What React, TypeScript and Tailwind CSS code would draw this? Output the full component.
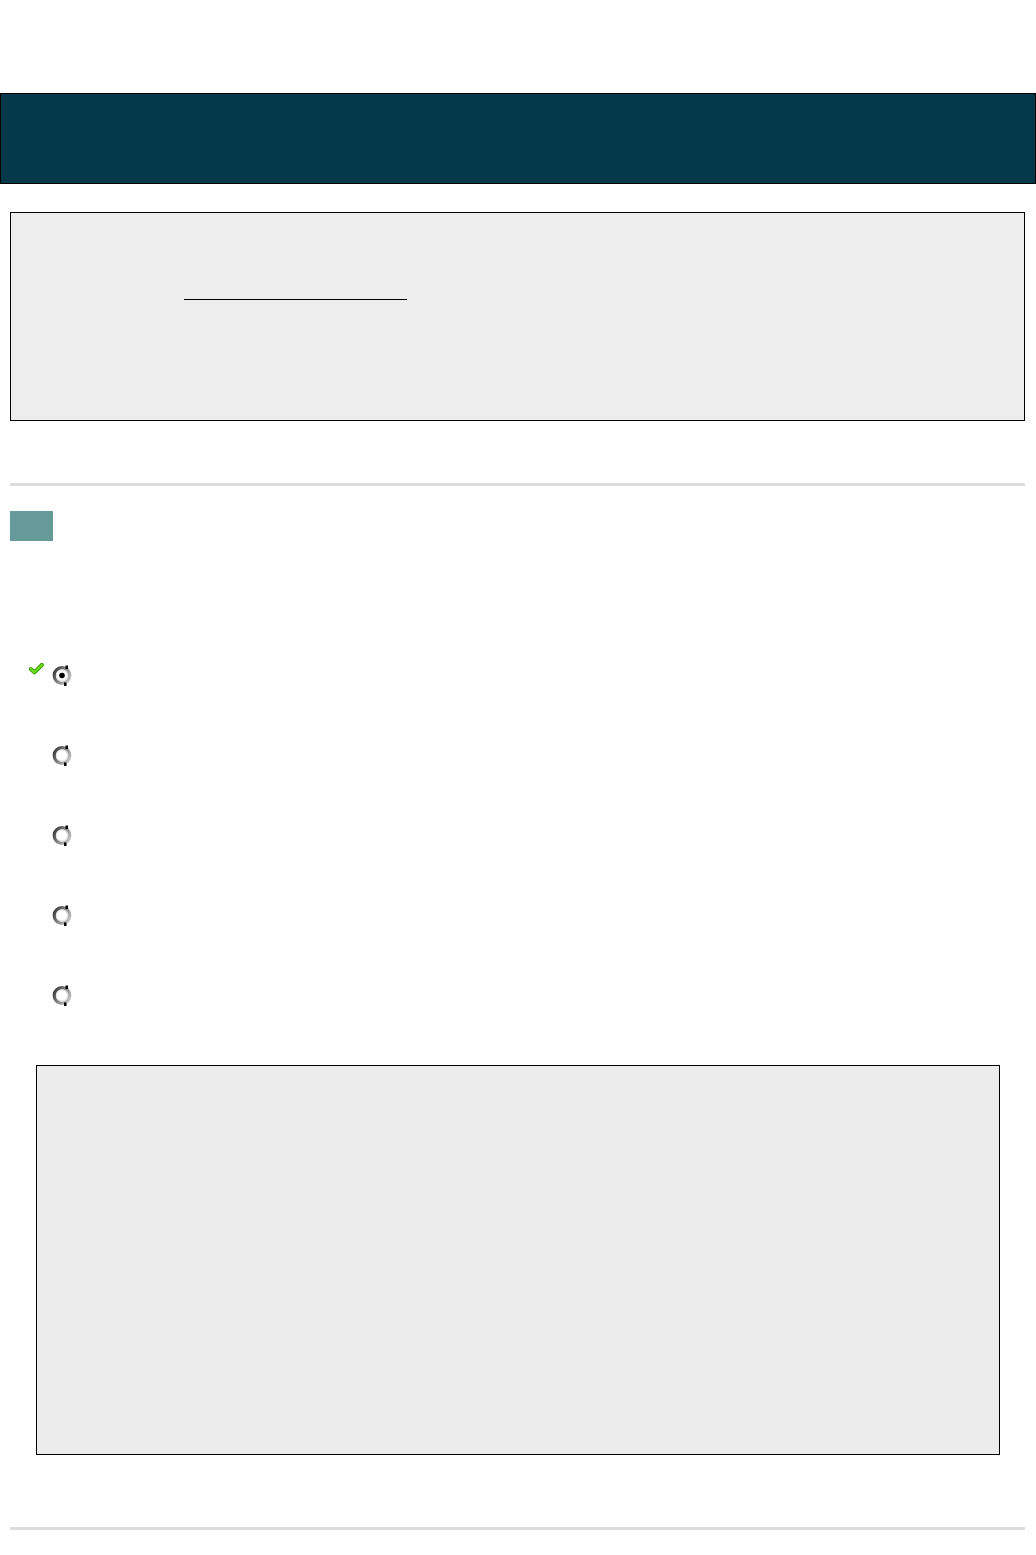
import React from "react";

function Check() {
  return (
    <svg width="15" height="12" viewBox="0 0 15 12" className="block">
      <path d="M1.8 6 L5.4 9.3 L12.8 2" fill="none" stroke="#3c9200" strokeWidth="4" strokeLinecap="round" strokeLinejoin="round" />
      <path d="M1.8 6 L5.4 9.3 L12.8 2" fill="none" stroke="#66e01a" strokeWidth="2.3" strokeLinecap="round" strokeLinejoin="round" />
    </svg>
  );
}

function Radio({ checked, id }: { checked?: boolean; id: string }) {
  return (
    <svg width="21" height="23" viewBox="0 0 21 23" className="block shrink-0">
      <defs>
        <linearGradient id={id} x1="0" y1="0.2" x2="1" y2="0.8">
          <stop offset="0" stopColor="#3a3a3a" />
          <stop offset="0.5" stopColor="#888888" />
          <stop offset="1" stopColor="#c4c4c4" />
        </linearGradient>
      </defs>
      <circle cx="10" cy="11.5" r="7.8" fill="#ffffff" stroke={`url(#${id})`} strokeWidth="3.2" />
      <circle cx="10" cy="11.5" r="5.6" fill="none" stroke="#dddddd" strokeWidth="1" />
      <rect x="13.5" y="1.5" width="2.5" height="3.5" fill="#000" />
      <rect x="12" y="18.5" width="2.5" height="3.5" fill="#000" />
      {checked && <circle cx="10" cy="11.5" r="2.8" fill="#000" />}
    </svg>
  );
}

export default function App() {
  const rows = [true, false, false, false, false];
  return (
    <div className="bg-white w-[1036px] h-[1555px] overflow-hidden" style={{ fontFamily: '"Liberation Sans", Arial, sans-serif' }}>
      <div className="h-[93px]" />
      <div className="h-[91px] bg-[#02384a] border border-black" />
      <div className="mt-[28px] ml-[10px] w-[1015px] h-[209px] bg-[#ededed] border border-black pt-[86px] pl-[173px]">
        <span className="block w-[223px] h-0 border-b border-black" />
      </div>
      <div className="mt-[62px] ml-[10px] w-[1015px] h-[3px] bg-[#dcdcdc]" />
      <div className="mt-[25px] ml-[10px] w-[43px] h-[30px] bg-[#669999]" />
      <div className="mt-[94px]">
        {rows.map((c, i) => (
          <div key={i} className="h-[80px] flex items-start">
            <div className="w-[52px] shrink-0 pl-[29px] pt-[28px]">{c && <Check />}</div>
            <div className="pt-[29px] shrink-0">
              <Radio checked={c} id={`rg${i}`} />
            </div>
          </div>
        ))}
      </div>
      <div className="mt-[30px] ml-[36px] w-[964px] h-[390px] bg-[#ececec] border border-black" />
      <div className="mt-[72px] ml-[10px] w-[1015px] h-[3px] bg-[#dcdcdc]" />
    </div>
  );
}
